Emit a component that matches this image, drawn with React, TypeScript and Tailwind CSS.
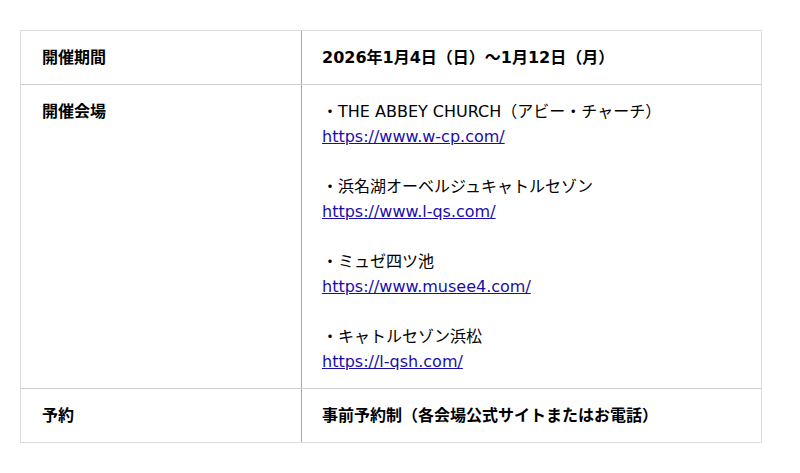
const venues = [
  { name: "・THE ABBEY CHURCH（アビー・チャーチ）", url: "https://www.w-cp.com/" },
  { name: "・浜名湖オーベルジュキャトルセゾン", url: "https://www.l-qs.com/" },
  { name: "・ミュゼ四ツ池", url: "https://www.musee4.com/" },
  { name: "・キャトルセゾン浜松", url: "https://l-qsh.com/" },
];

const Row = ({
  label,
  children,
  last,
}: {
  label: string;
  children: React.ReactNode;
  last?: boolean;
}) => (
  <div
    className={`grid grid-cols-[281px_1fr] ${last ? "" : "border-b border-[#cccccc]"}`}
  >
    <div className="border-r border-[#a8a8a8] px-[21px] py-[14px] font-bold">
      {label}
    </div>
    <div className="px-[20px] py-[14px]">{children}</div>
  </div>
);

export default function App() {
  return (
    <div
      className="w-[800px] h-[473px] bg-white pt-[30px] px-[20px] text-black text-[16px] leading-[25px]"
      style={{ fontFamily: '"DejaVu Sans", "Noto Sans CJK JP", sans-serif' }}
    >
      <div className="w-[742px] border border-[#dddddd]">
        <Row label="開催期間">
          <span className="font-bold">2026年1月4日（日）〜1月12日（月）</span>
        </Row>
        <Row label="開催会場">
          {venues.map((v, i) => (
            <div key={v.url}>
              <div>{v.name}</div>
              <a href={v.url} className="text-[#1a0dab] underline">
                {v.url}
              </a>
              {i < venues.length - 1 && <div className="h-[25px]" />}
            </div>
          ))}
        </Row>
        <Row label="予約" last>
          <span className="font-bold">事前予約制（各会場公式サイトまたはお電話）</span>
        </Row>
      </div>
    </div>
  );
}
